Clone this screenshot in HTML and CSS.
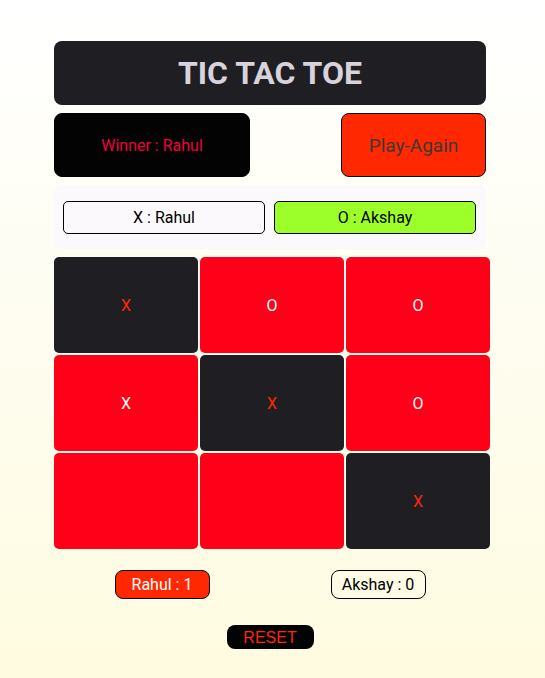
FILE: index.html
```html
<!DOCTYPE html>
<html lang="en">
<head>
<meta charset="utf-8">
<meta name="viewport" content="width=device-width, initial-scale=1">
<title>Tic Tac Toe</title>
<link rel="stylesheet" href="styles.css">
</head>
<body>
<main class="game">
  <h1 class="title">TIC TAC TOE</h1>
  <div class="status">
    <p class="winner">Winner : Rahul</p>
    <button class="again" type="button">Play-Again</button>
  </div>
  <div class="players">
    <p class="player">X : Rahul</p>
    <p class="player active">O : Akshay</p>
  </div>
  <div class="board">
    <button class="cell win" type="button">X</button>
    <button class="cell" type="button">O</button>
    <button class="cell" type="button">O</button>
    <button class="cell" type="button">X</button>
    <button class="cell win" type="button">X</button>
    <button class="cell" type="button">O</button>
    <button class="cell" type="button" aria-label="Empty"></button>
    <button class="cell" type="button" aria-label="Empty"></button>
    <button class="cell win" type="button">X</button>
  </div>
  <div class="scores">
    <p class="score leader">Rahul : 1</p>
    <p class="score">Akshay : 0</p>
  </div>
  <button class="reset" type="button">RESET</button>
</main>
</body>
</html>
```
FILE: styles.css
```css
* {
  box-sizing: border-box;
  margin: 0;
}

body {
  min-height: 100vh;
  background: linear-gradient(#ffffff, #fefbe0);
  font: 16px/19px Roboto, sans-serif;
  color: #000;
}

button {
  padding: 0;
  border: 0;
  font: inherit;
  cursor: pointer;
}

.game {
  display: flex;
  flex-direction: column;
  gap: 8px;
  padding: 41px 59px 28px 54px;
}

.title {
  display: grid;
  place-items: center;
  height: 64px;
  border-radius: 8px;
  background: #1f1e23;
  color: #d8d2dc;
  font-size: 32px;
  line-height: 38px;
}

.status {
  display: flex;
  justify-content: space-between;
  height: 64px;
}

.winner,
.again {
  display: grid;
  place-items: center;
  border: 1px solid #000;
  border-radius: 8px;
}

.winner {
  width: 196px;
  background: #030303;
  color: #ee003c;
}

.again {
  width: 145px;
  background: #ff2800;
  color: #3e3836;
  font-size: 19px;
  line-height: 23px;
}

.players {
  display: flex;
  align-items: center;
  gap: 9px;
  height: 64px;
  padding: 0 10px 0 9px;
  border-radius: 8px;
  background: #fbf9fc;
}

.player {
  flex: 1;
  padding: 6px;
  border: 1px solid #000;
  border-radius: 5px;
  text-align: center;
}

.active {
  background: #9dff2a;
}

.board {
  display: grid;
  grid-template-columns: repeat(3, 1fr);
  grid-auto-rows: 96px;
  gap: 2px;
  margin-right: -4px;
}

.cell {
  border-radius: 5px;
  background: #ff0018;
  color: #fff;
}

.win {
  background: #1f1e23;
  color: #ff2800;
}

.scores {
  display: flex;
  justify-content: space-around;
  margin-top: 13px;
}

.score {
  width: 95px;
  padding: 4px 0;
  border: 1px solid #000;
  border-radius: 8px;
  text-align: center;
}

.leader {
  background: #ff2800;
  color: #fff;
}

.reset {
  align-self: center;
  width: 87px;
  height: 24px;
  margin-top: 18px;
  border-radius: 8px;
  background: #030303;
  color: #ff2800;
  font-family: "Liberation Sans", sans-serif;
}
```
